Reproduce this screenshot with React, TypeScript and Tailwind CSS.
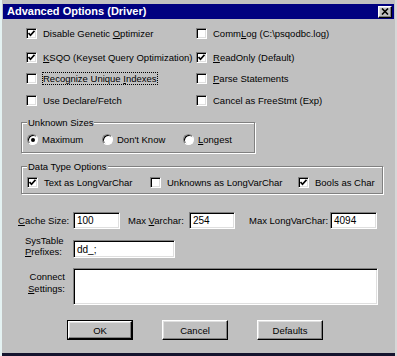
import React from "react";

const sunken =
  "border border-t-[#808080] border-l-[#808080] border-b-white border-r-white shadow-[inset_1px_1px_0_#000,inset_-1px_-1px_0_#dfdfdf]";
const raised =
  "border border-t-white border-l-white border-b-black border-r-black shadow-[inset_-1px_-1px_0_#808080,inset_1px_1px_0_#dfdfdf]";

function Check({ checked }: { checked?: boolean }) {
  return (
    <span className={`w-[11px] h-[11px] bg-white flex items-center justify-center shrink-0 ${sunken}`}>
      {checked && (
        <svg width="7" height="7" viewBox="0 0 7 7">
          <path d="M0.5 3 L2.5 5.2 L6.5 0.8" stroke="#000" strokeWidth="1.7" fill="none" />
        </svg>
      )}
    </span>
  );
}

function Radio({ on }: { on?: boolean }) {
  return (
    <span
      className={`w-[11px] h-[11px] rounded-full bg-white flex items-center justify-center shrink-0 border border-t-[#808080] border-l-[#808080] border-b-white border-r-white shadow-[inset_1px_1px_0_#000]`}
    >
      {on && <span className="w-[4px] h-[4px] rounded-full bg-black" />}
    </span>
  );
}

function CB({ checked, children }: { checked?: boolean; children: React.ReactNode }) {
  return (
    <div className="flex items-center h-[13px]">
      <Check checked={checked} />
      <span className="ml-[6px] whitespace-nowrap">{children}</span>
    </div>
  );
}

const U = ({ children }: { children: React.ReactNode }) => <span className="underline underline-offset-[1px]">{children}</span>;

function Group({ label, className, children }: { label: string; className: string; children: React.ReactNode }) {
  return (
    <div className={`relative border border-[#808080] shadow-[inset_1px_1px_0_#fff,1px_1px_0_#fff] ${className}`}>
      <span className="absolute left-[5px] top-[-6px] leading-[11px] px-[1px] bg-[#c0c0c0] whitespace-nowrap">{label}</span>
      {children}
    </div>
  );
}

function Btn({ children, def }: { children: React.ReactNode; def?: boolean }) {
  return (
    <div className={`w-[66px] h-[20px] ${def ? "border border-black" : ""}`}>
      <div className={`w-full h-full flex items-center justify-center bg-[#c0c0c0] ${raised}`}>{children}</div>
    </div>
  );
}

export default function App() {
  return (
    <div
      className="w-[397px] h-[356px] bg-[#c0c0c0] flex flex-col text-black text-[9.5px] leading-[11px] shadow-[inset_2px_0_0_#e4f2f2,inset_-2px_0_0_#d8d8d8,inset_0_-3px_0_#14142e]"
      style={{ fontFamily: '"Liberation Sans", Arial, sans-serif' }}
    >
      {/* title bar */}
      <div className="mx-[3px] mt-[4px] h-[15px] bg-[#000080] flex items-center justify-between">
        <span className="ml-[4px] text-white font-bold text-[11px] leading-[13px] whitespace-nowrap">Advanced Options (Driver)</span>
        <div className={`mr-[2px] w-[14px] h-[12px] bg-[#c0c0c0] flex items-center justify-center ${raised}`}>
          <svg width="8" height="7" viewBox="0 0 8 7">
            <path d="M1 0.5 L7 6.5 M7 0.5 L1 6.5" stroke="#000" strokeWidth="1.6" />
          </svg>
        </div>
      </div>

      {/* checkbox grid */}
      <div className="ml-[26px] mt-[8px] grid grid-cols-[170px_1fr]">
        <CB checked>
          Disable Genetic <U>O</U>ptimizer
        </CB>
        <CB>
          Comm<U>L</U>og (C:\psqodbc.log)
        </CB>
      </div>
      <div className="ml-[26px] mt-[11px] grid grid-cols-[170px_1fr]">
        <CB checked>
          <U>K</U>SQO (Keyset Query Optimization)
        </CB>
        <CB checked>
          <U>R</U>eadOnly (Default)
        </CB>
      </div>
      <div className="ml-[26px] mt-[8px] grid grid-cols-[170px_1fr]">
        <div className="flex items-center h-[13px]">
          <Check />
          <span className="ml-[5px] whitespace-nowrap border border-dotted border-black px-[0px] leading-[11px]">
            Recognize Unique <U>I</U>ndexes
          </span>
        </div>
        <CB>
          <U>P</U>arse Statements
        </CB>
      </div>
      <div className="ml-[26px] mt-[9px] grid grid-cols-[170px_1fr]">
        <CB>Use Declare/Fetch</CB>
        <CB>Cancel as FreeStmt (Exp)</CB>
      </div>

      {/* Unknown sizes */}
      <Group label="Unknown Sizes" className="ml-[21px] mt-[15px] w-[234px] h-[31px]">
        <div className="flex items-center pl-[5px] mt-[10px] h-[13px]">
          <div className="flex items-center w-[75px]">
            <Radio on />
            <span className="ml-[4px]">Maximum</span>
          </div>
          <div className="flex items-center w-[81px]">
            <Radio />
            <span className="ml-[4px]">Don't Know</span>
          </div>
          <div className="flex items-center">
            <Radio />
            <span className="ml-[4px]">
              <U>L</U>ongest
            </span>
          </div>
        </div>
      </Group>

      {/* Data type options */}
      <Group label="Data Type Options" className="ml-[21px] mt-[13px] w-[362px] h-[28px]">
        <div className="flex items-center pl-[5px] mt-[9px] h-[13px]">
          <div className="w-[123px]">
            <CB checked>Text as LongVarChar</CB>
          </div>
          <div className="w-[148px]">
            <CB>Unknowns as LongVarChar</CB>
          </div>
          <CB checked>Bools as Char</CB>
        </div>
      </Group>

      {/* cache row */}
      <div className="flex items-center mt-[18px] ml-[18px] h-[17px]">
        <span className="w-[55px] whitespace-nowrap">
          <U>C</U>ache Size:
        </span>
        <div className={`w-[47px] h-[17px] bg-white pl-[3px] flex items-center text-[10px] ${sunken}`}>100</div>
        <span className="ml-[8px] w-[61px] whitespace-nowrap">
          Max <U>V</U>archar:
        </span>
        <div className={`w-[46px] h-[17px] bg-white pl-[3px] flex items-center text-[10px] ${sunken}`}>254</div>
        <span className="ml-[14px] w-[81px] whitespace-nowrap">Max LongVarChar:</span>
        <div className={`w-[47px] h-[17px] bg-white pl-[3px] flex items-center text-[10px] ${sunken}`}>4094</div>
      </div>

      {/* systable prefixes */}
      <div className="flex items-end mt-[6px] ml-[25px]">
        <div className="w-[48px] leading-[11px] pb-[1px]">
          <div>SysTable</div>
          <div>
            <U>P</U>refixes:
          </div>
        </div>
        <div className={`w-[102px] h-[18px] bg-white pl-[3px] flex items-center text-[10px] ${sunken}`}>dd_;</div>
      </div>

      {/* connect settings */}
      <div className="flex items-start mt-[10px] ml-[18px]">
        <div className="w-[48px] text-right leading-[12px] mt-[3px] pr-[1px]">
          <div>Connect</div>
          <div>
            <U>S</U>ettings:
          </div>
        </div>
        <div className={`ml-[7px] w-[305px] h-[37px] bg-white ${sunken}`} />
      </div>

      {/* buttons */}
      <div className="flex mt-[15px] ml-[67px] gap-[29px]">
        <Btn def>OK</Btn>
        <Btn>Cancel</Btn>
        <Btn>Defaults</Btn>
      </div>
    </div>
  );
}
